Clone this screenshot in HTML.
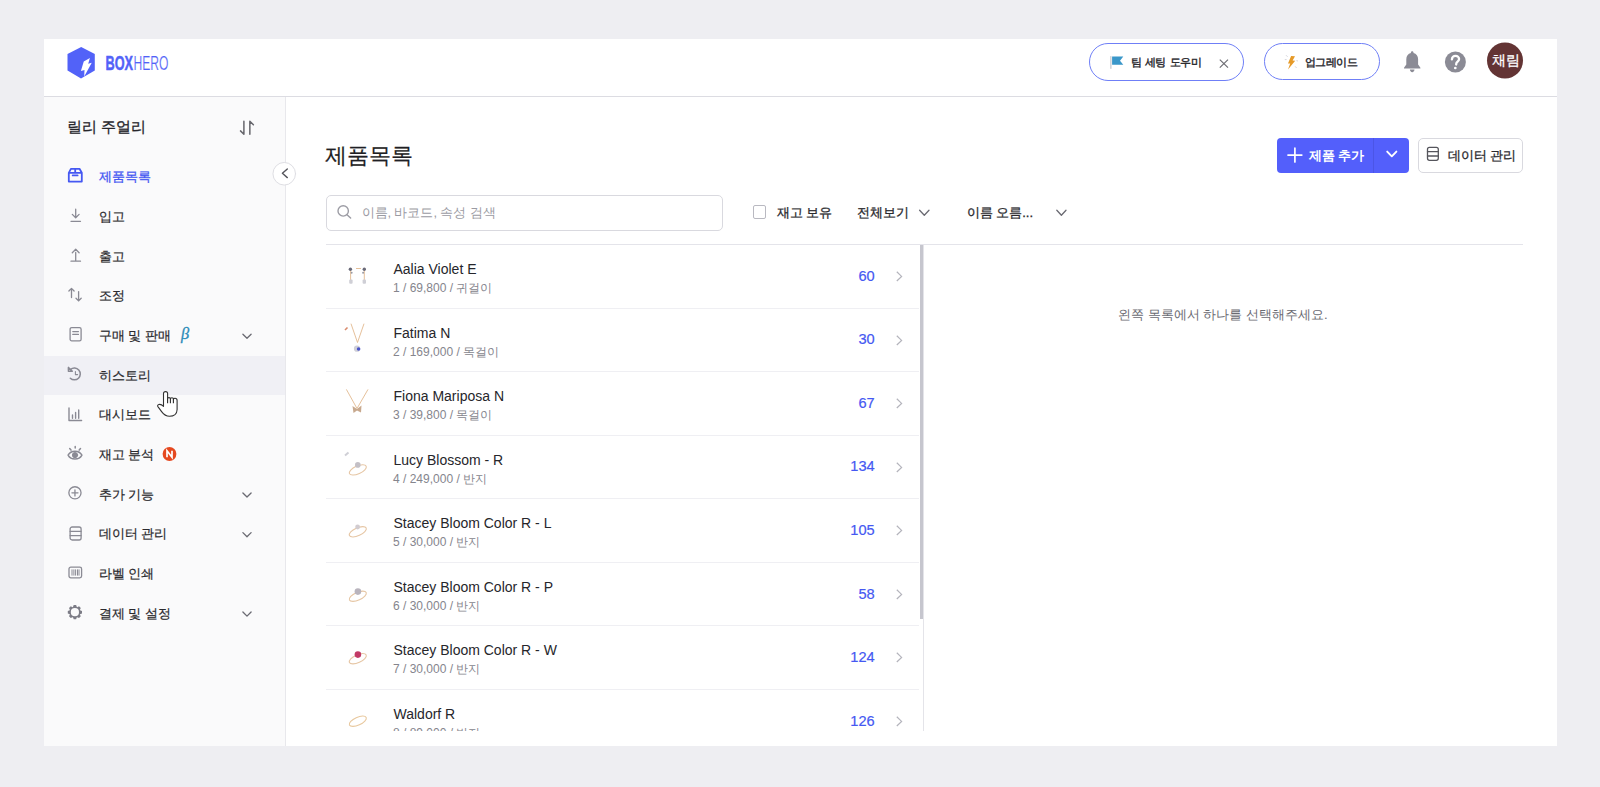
<!DOCTYPE html>
<html lang="ko">
<head>
<meta charset="utf-8">
<style>
*{box-sizing:border-box;margin:0;padding:0}
html,body{width:1600px;height:787px;overflow:hidden}
body{background:#eeeef2;font-family:"Liberation Sans",sans-serif;color:#222;position:relative}
.a{position:absolute}
.t{position:absolute;white-space:nowrap;line-height:1;z-index:6}
svg{position:absolute;overflow:visible;z-index:5}
#card{left:44px;top:39px;width:1513px;height:707px;background:#fff}
#hdrline{left:44px;top:96px;width:1513px;height:1px;background:#dcdce2}
#side{left:44px;top:97px;width:241px;height:649px;background:#fafafb}
#sideline{left:285px;top:97px;width:1px;height:649px;background:#e8e8ec}
.pill{position:absolute;border:1.3px solid #6f7ff7;border-radius:19px;background:#fff}
.m{-webkit-text-stroke-width:0.3px}
.nav{-webkit-text-stroke-width:0.22px;font-size:13px;font-weight:500;color:#2a2a2e}
</style>
</head>
<body>
<div class="a" id="card"></div>
<div class="a" id="hdrline"></div>
<div class="a" id="side"></div>
<div class="a" id="sideline"></div>

<!-- HEADER -->

<svg class="a" style="left:0;top:0" width="1600" height="787" viewBox="0 0 1600 787">
  <polygon points="81.2,47 94.8,54.1 94.8,70.4 81,78.6 67.5,70.6 67.5,54.1" fill="#5262f8"/>
  <polygon points="89.9,57.9 83.75,61.4 80.9,71 84.5,70.1 84.2,76.45 91.75,62.8 88.2,63.75" fill="#fff"/>
  <text x="105.5" y="69.6" font-family="Liberation Sans" font-size="19.5" font-weight="700" fill="#5262f8" stroke="#5262f8" stroke-width="0.5" textLength="27.5" lengthAdjust="spacingAndGlyphs">BOX</text>
  <text x="133.5" y="69.6" font-family="Liberation Sans" font-size="19.5" font-weight="400" fill="#5262f8" stroke="#fff" stroke-width="0.22" textLength="35" lengthAdjust="spacingAndGlyphs">HERO</text>
  <!-- flag -->
  <rect x="1110.1" y="56.1" width="1.5" height="12.7" fill="#d2d2d6"/>
  <polygon points="1112.1,56.6 1123.3,56.6 1120,60.7 1123.3,64.85 1112.1,64.85" fill="#3a97c9"/>
  <!-- close x -->
  <path d="M1219.8 59.6 L1228 67.6 M1228 59.6 L1219.8 67.6" stroke="#6e6e74" stroke-width="1.2" fill="none"/>
  <!-- bolt -->
  <polygon points="1291.1,56 1295,56.2 1292.6,60.6 1295.2,60.8 1288,69.6 1290.2,63.6 1288,63.4" fill="#e69a28"/>
  <path d="M1286 55.2 L1287.6 56.8 M1284.8 59.6 H1286.6 M1296.4 60.6 L1298 61 M1295.2 66.4 L1296.6 68" stroke="#c9c9d2" stroke-width="0.8" fill="none"/>
  <!-- bell -->
  <path d="M1412.2 51.3 c0.8 0 1.3 0.6 1.3 1.3 v0.5 c2.9 0.7 4.6 3.2 4.6 6.2 v5.2 l2.3 3.3 v0.6 h-16.4 v-0.6 l2.3 -3.3 v-5.2 c0 -3 1.7 -5.5 4.6 -6.2 v-0.5 c0 -0.7 0.5 -1.3 1.3 -1.3 z M1409.9 69.6 h4.6 c0 1.4 -1 2.6 -2.3 2.6 s-2.3 -1.2 -2.3 -2.6 z" fill="#8b8b95"/>
  <!-- help -->
  <circle cx="1455.4" cy="62" r="10.5" fill="#8b8b95"/>
  <path d="M1451.9 59.4 c0 -2.1 1.6 -3.6 3.6 -3.6 s3.6 1.4 3.6 3.3 c0 2.5 -2.9 2.7 -2.9 5 v0.5" stroke="#fff" stroke-width="2.3" fill="none" stroke-linecap="round"/>
  <circle cx="1455.3" cy="68" r="1.35" fill="#fff"/>
  <!-- avatar -->
  <circle cx="1505" cy="60.5" r="18" fill="#633434"/>
</svg>
<div class="pill" style="left:1089px;top:43px;width:155px;height:38px"></div>
<div class="pill" style="left:1264px;top:43px;width:116px;height:37px"></div>
<div class="t" style="left:1130.5px;top:57.2px;font-size:11.3px;-webkit-text-stroke-width:0.4px;color:#26262b;word-spacing:1.3px;letter-spacing:-0.55px">팀 세팅 도우미</div>
<div class="t" style="left:1305px;top:57.2px;font-size:11.3px;-webkit-text-stroke-width:0.4px;letter-spacing:-0.55px;color:#26262b">업그레이드</div>
<div class="t m" style="left:1491.5px;top:53px;font-size:14px;color:#fff">채림</div>
<!--HEADER-->

<!-- SIDEBAR -->
<div class="a" style="left:44px;top:356px;width:241px;height:39px;background:#f0f0f5"></div>
<div class="t" style="left:67px;top:118.5px;font-size:15.2px;-webkit-text-stroke-width:0.32px;color:#26262b">릴리 주얼리</div>
<div class="t nav" style="left:98.8px;top:170.25px;color:#4558f2;-webkit-text-stroke-width:0.3px">제품목록</div>
<div class="t nav" style="left:98.8px;top:209.94px;color:#2a2a2e;font-weight:500">입고</div>
<div class="t nav" style="left:98.8px;top:249.63px;color:#2a2a2e;font-weight:500">출고</div>
<div class="t nav" style="left:98.8px;top:289.32px;color:#2a2a2e;font-weight:500">조정</div>
<div class="t nav" style="left:98.8px;top:329.01px;color:#2a2a2e;font-weight:500">구매 및 판매</div>
<div class="t nav" style="left:98.8px;top:368.70px;color:#2a2a2e;font-weight:500">히스토리</div>
<div class="t nav" style="left:98.8px;top:408.39px;color:#2a2a2e;font-weight:500">대시보드</div>
<div class="t nav" style="left:98.8px;top:448.08px;color:#2a2a2e;font-weight:500">재고 분석</div>
<div class="t nav" style="left:98.8px;top:487.77px;color:#2a2a2e;font-weight:500">추가 기능</div>
<div class="t nav" style="left:98.8px;top:527.46px;color:#2a2a2e;font-weight:500">데이터 관리</div>
<div class="t nav" style="left:98.8px;top:567.15px;color:#2a2a2e;font-weight:500">라벨 인쇄</div>
<div class="t nav" style="left:98.8px;top:606.84px;color:#2a2a2e;font-weight:500">결제 및 설정</div>
<div class="t" style="left:181px;top:326px;font-family:'Liberation Serif',serif;font-style:italic;font-weight:400;font-size:16.5px;color:#2b8bb8;-webkit-text-stroke-width:0.3px">β</div>
<svg class="a" style="left:0;top:0" width="1600" height="787" viewBox="0 0 1600 787"><g fill="none" stroke="#8a8a94" stroke-width="1.3" stroke-linecap="round" stroke-linejoin="round">
<path d="M243.9 121.3 V134.2 L240.5 130.9 M249.85 134.2 V121.3 L253.4 124.8" stroke="#66666c" stroke-width="1.5"/>
<g transform="translate(68.3,168.2)"><path d="M2.6 0.6 H11.2 L13.5 4.6 V13.4 H0.5 V4.6 Z M0.5 4.6 H13.5 M6.9 0.6 V4.6" stroke="#4558f2" stroke-width="1.8"/><path d="M4.4 7.2 H9.3" stroke="#4558f2" stroke-width="1.8"/></g>
<g transform="translate(69.1,208.4)"><path d="M6.6 0.8 V9.2 M3.2 6 L6.6 9.4 L10 6 M1.9 12.9 H11.4"/></g>
<g transform="translate(69.1,248.3)"><path d="M6.6 4.2 V12 M3.2 4.4 L6.6 1 L10 4.4 M1.9 12.9 H11.4"/></g>
<g transform="translate(68.3,287.6)"><path d="M3.2 0.8 V10 M0.6 3.4 L3.2 0.8 L5.8 3.4 M10.3 4 V13.3 M7.7 10.7 L10.3 13.3 L12.9 10.7"/></g>
<g transform="translate(68.6,327)"><rect x="1.5" y="0.6" width="11" height="13.2" rx="1.6"/><path d="M4.2 4.6 H9.8 M4.2 7.4 H9.8"/></g>
<path d="M70.6 369.4 A5.9 5.9 0 1 1 70.3 378.2" stroke-width="1.5"/><path d="M68.5 367.6 L72.3 371.3 M68.4 367.6 V370.6 M68.4 371.3 H72.3" stroke-width="1.5"/><path d="M75.4 371.6 V374.6 H77.6" stroke-width="1.1"/>
<g transform="translate(68.3,407.5)"><path d="M0.7 0.4 V13 H13.3 M4.2 10.7 V7.5 M7.3 10.7 V5 M10.4 10.7 V2.5" stroke-width="1.4"/></g>
<g transform="translate(68.3,445.2)"><path d="M-0.2 9.9 C2.6 4.6 10.8 4.6 13.6 9.9 C10.8 15.2 2.6 15.2 -0.2 9.9 Z" stroke-width="1.5"/><circle cx="6.7" cy="9.9" r="2.6" fill="#8a8a94" stroke-width="1"/><path d="M6.9 1.2 V2.9 M1.4 3.4 L2.7 4.9 M12.2 3.4 L10.9 4.9" stroke-width="1.5"/></g>
<g transform="translate(68.3,486.2)"><circle cx="6.65" cy="6.65" r="6.1"/><path d="M6.65 3.6 V9.7 M3.6 6.65 H9.7"/></g>
<g transform="translate(68.6,526.3)"><rect x="1.5" y="0.7" width="11" height="13" rx="2"/><path d="M1.5 5 H12.5 M1.5 9.3 H12.5"/></g>
<g transform="translate(68.3,565.8)"><rect x="0.7" y="1.3" width="12.6" height="10.8" rx="1.8"/><path d="M3.7 4 V9.4 M5.6 4 V9.4 M7.3 4 V9.4 M9.2 4 V9.4 M10.7 4 V9.4" stroke-width="1"/></g>
<path d="M72.96 607.05 L73.68 605.10 L76.12 605.10 L76.84 607.05 L77.17 607.19 L79.06 606.32 L80.78 608.04 L79.91 609.93 L80.05 610.26 L82.00 610.98 L82.00 613.42 L80.05 614.14 L79.91 614.47 L80.78 616.36 L79.06 618.08 L77.17 617.21 L76.84 617.35 L76.12 619.30 L73.68 619.30 L72.96 617.35 L72.63 617.21 L70.74 618.08 L69.02 616.36 L69.89 614.47 L69.75 614.14 L67.80 613.42 L67.80 610.98 L69.75 610.26 L69.89 609.93 L69.02 608.04 L70.74 606.32 L72.63 607.19 Z M79.00 612.20 A4.1 4.1 0 1 0 70.80 612.20 A4.1 4.1 0 1 0 79.00 612.20 Z" fill="#7c7c86" fill-rule="evenodd" stroke="none"/>
<path d="M242.9 492.97 L247 497.07 L251.1 492.97" stroke="#6a6a72" stroke-width="1.3"/>
<path d="M242.9 532.66 L247 536.76 L251.1 532.66" stroke="#6a6a72" stroke-width="1.3"/>
<path d="M242.9 612.04 L247 616.14 L251.1 612.04" stroke="#6a6a72" stroke-width="1.3"/>
<path d="M242.9 334.21 L247 338.31 L251.1 334.21" stroke="#6a6a72" stroke-width="1.3"/>
<circle cx="284.25" cy="173.75" r="11.3" fill="#fff" stroke="#dedee3" stroke-width="1"/>
<path d="M287.3 168.9 L282.4 173.3 L287.3 177.6" stroke="#55555c" stroke-width="1.4"/>
</g>
<circle cx="169.5" cy="454" r="6.9" fill="#e5481f"/>
<path d="M167 457.3 V450.7 L172 457.3 V450.7" fill="none" stroke="#fff" stroke-width="1.7" stroke-linejoin="miter"/>
</svg>

<!-- CONTENT -->
<div class="t" style="left:325.2px;top:145.2px;font-size:22px;color:#1f1f24;-webkit-text-stroke-width:0.2px">제품목록</div>
<div class="a" style="left:1277px;top:137.5px;width:132px;height:35px;background:#535ffb;border-radius:4px;z-index:2"></div>
<div class="a" style="left:1373px;top:137.5px;width:1px;height:35px;background:#4b55e6;z-index:3"></div>
<div class="t" style="left:1309px;top:148.7px;font-size:13px;font-weight:700;color:#fff;word-spacing:-0.04em">제품 추가</div>
<div class="a" style="left:1417.5px;top:137.5px;width:105.5px;height:35px;border:1px solid #d9d9df;border-radius:5px;background:#fff;z-index:2"></div>
<div class="t m" style="left:1448.1px;top:148.7px;font-size:13px;color:#2a2a2e;word-spacing:-0.04em">데이터 관리</div>
<div class="a" style="left:326px;top:194.5px;width:397px;height:36px;border:1px solid #d9d9df;border-radius:5px;background:#fff;z-index:2"></div>
<div class="t" style="left:361.5px;top:206.4px;font-size:13px;color:#9b9ba3;word-spacing:-0.02em">이름, 바코드, 속성 검색</div>
<div class="a" style="left:752.5px;top:205.2px;width:13.5px;height:13.5px;border:1px solid #b9b9c1;border-radius:2px;background:#fff;z-index:2"></div>
<div class="t m" style="left:776.5px;top:206.1px;font-size:13px;color:#2a2a2e;word-spacing:-0.04em">재고 보유</div>
<div class="t m" style="left:857.4px;top:206.1px;font-size:13px;color:#2a2a2e">전체보기</div>
<div class="t m" style="left:967.1px;top:206.1px;font-size:13px;color:#2a2a2e;word-spacing:-0.04em">이름 오름...</div>
<div class="a" style="left:326px;top:244px;width:1197px;height:1px;background:#e4e4ea"></div>
<div class="t" style="left:1223px;top:308px;font-size:13px;color:#6a6a72;transform:translateX(-50%)">왼쪽 목록에서 하나를 선택해주세요.</div>
<svg class="a" style="left:0;top:0" width="1600" height="787" viewBox="0 0 1600 787"><g fill="none" stroke-linecap="round" stroke-linejoin="round">
<circle cx="343.2" cy="210.9" r="5.2" stroke="#9d9da5" stroke-width="1.4"/><path d="M347 214.8 L350.6 218" stroke="#9d9da5" stroke-width="1.5"/>
<path d="M1288 155.1 H1301.8 M1294.9 148.2 V162" stroke="#fff" stroke-width="1.7"/>
<path d="M1387.2 151.6 L1391.8 156.3 L1396.4 151.6" stroke="#fff" stroke-width="1.9"/>
<rect x="1427.5" y="147.3" width="10.8" height="13" rx="2" stroke="#55555c" stroke-width="1.3"/><path d="M1427.5 151.7 H1438.3 M1427.5 156 H1438.3" stroke="#55555c" stroke-width="1.3"/>
<path d="M919.6 210.3 L924.3 215.2 L929 210.3" stroke="#6a6a72" stroke-width="1.3"/>
<path d="M1056.8 210.3 L1061.4 215.2 L1066 210.3" stroke="#6a6a72" stroke-width="1.3"/>
</g></svg>

<!-- LIST -->
<div class="a" style="left:326px;top:245px;width:598px;height:486px;overflow:hidden;z-index:1">
<div class="a" style="left:0;top:62.55px;width:593px;height:1px;background:#efeff3"></div>
<div class="t" style="left:67.5px;top:17.10px;font-size:14px;color:#26262b">Aalia Violet E</div>
<div class="t" style="left:67px;top:37.10px;font-size:12px;color:#85858d">1 / 69,800 / 귀걸이</div>
<div class="t" style="right:49.3px;top:23.80px;font-size:14.6px;-webkit-text-stroke-width:0.2px;color:#4558f2">60</div>
<svg style="left:0;top:0.00px" width="597" height="64"><path d="M570.8 26.8 L575.6 31.4 L570.8 36" fill="none" stroke="#b4b4bc" stroke-width="1.2"/></svg>
<div class="a" style="left:0;top:126.10px;width:593px;height:1px;background:#efeff3"></div>
<div class="t" style="left:67.5px;top:80.65px;font-size:14px;color:#26262b">Fatima N</div>
<div class="t" style="left:67px;top:100.65px;font-size:12px;color:#85858d">2 / 169,000 / 목걸이</div>
<div class="t" style="right:49.3px;top:87.35px;font-size:14.6px;-webkit-text-stroke-width:0.2px;color:#4558f2">30</div>
<svg style="left:0;top:63.55px" width="597" height="64"><path d="M570.8 26.8 L575.6 31.4 L570.8 36" fill="none" stroke="#b4b4bc" stroke-width="1.2"/></svg>
<div class="a" style="left:0;top:189.65px;width:593px;height:1px;background:#efeff3"></div>
<div class="t" style="left:67.5px;top:144.20px;font-size:14px;color:#26262b">Fiona Mariposa N</div>
<div class="t" style="left:67px;top:164.20px;font-size:12px;color:#85858d">3 / 39,800 / 목걸이</div>
<div class="t" style="right:49.3px;top:150.90px;font-size:14.6px;-webkit-text-stroke-width:0.2px;color:#4558f2">67</div>
<svg style="left:0;top:127.10px" width="597" height="64"><path d="M570.8 26.8 L575.6 31.4 L570.8 36" fill="none" stroke="#b4b4bc" stroke-width="1.2"/></svg>
<div class="a" style="left:0;top:253.20px;width:593px;height:1px;background:#efeff3"></div>
<div class="t" style="left:67.5px;top:207.75px;font-size:14px;color:#26262b">Lucy Blossom - R</div>
<div class="t" style="left:67px;top:227.75px;font-size:12px;color:#85858d">4 / 249,000 / 반지</div>
<div class="t" style="right:49.3px;top:214.45px;font-size:14.6px;-webkit-text-stroke-width:0.2px;color:#4558f2">134</div>
<svg style="left:0;top:190.65px" width="597" height="64"><path d="M570.8 26.8 L575.6 31.4 L570.8 36" fill="none" stroke="#b4b4bc" stroke-width="1.2"/></svg>
<div class="a" style="left:0;top:316.75px;width:593px;height:1px;background:#efeff3"></div>
<div class="t" style="left:67.5px;top:271.30px;font-size:14px;color:#26262b">Stacey Bloom Color R - L</div>
<div class="t" style="left:67px;top:291.30px;font-size:12px;color:#85858d">5 / 30,000 / 반지</div>
<div class="t" style="right:49.3px;top:278.00px;font-size:14.6px;-webkit-text-stroke-width:0.2px;color:#4558f2">105</div>
<svg style="left:0;top:254.20px" width="597" height="64"><path d="M570.8 26.8 L575.6 31.4 L570.8 36" fill="none" stroke="#b4b4bc" stroke-width="1.2"/></svg>
<div class="a" style="left:0;top:380.30px;width:593px;height:1px;background:#efeff3"></div>
<div class="t" style="left:67.5px;top:334.85px;font-size:14px;color:#26262b">Stacey Bloom Color R - P</div>
<div class="t" style="left:67px;top:354.85px;font-size:12px;color:#85858d">6 / 30,000 / 반지</div>
<div class="t" style="right:49.3px;top:341.55px;font-size:14.6px;-webkit-text-stroke-width:0.2px;color:#4558f2">58</div>
<svg style="left:0;top:317.75px" width="597" height="64"><path d="M570.8 26.8 L575.6 31.4 L570.8 36" fill="none" stroke="#b4b4bc" stroke-width="1.2"/></svg>
<div class="a" style="left:0;top:443.85px;width:593px;height:1px;background:#efeff3"></div>
<div class="t" style="left:67.5px;top:398.40px;font-size:14px;color:#26262b">Stacey Bloom Color R - W</div>
<div class="t" style="left:67px;top:418.40px;font-size:12px;color:#85858d">7 / 30,000 / 반지</div>
<div class="t" style="right:49.3px;top:405.10px;font-size:14.6px;-webkit-text-stroke-width:0.2px;color:#4558f2">124</div>
<svg style="left:0;top:381.30px" width="597" height="64"><path d="M570.8 26.8 L575.6 31.4 L570.8 36" fill="none" stroke="#b4b4bc" stroke-width="1.2"/></svg>
<div class="a" style="left:0;top:507.40px;width:593px;height:1px;background:#efeff3"></div>
<div class="t" style="left:67.5px;top:461.95px;font-size:14px;color:#26262b">Waldorf R</div>
<div class="t" style="left:67px;top:481.95px;font-size:12px;color:#85858d">8 / 89,000 / 반지</div>
<div class="t" style="right:49.3px;top:468.65px;font-size:14.6px;-webkit-text-stroke-width:0.2px;color:#4558f2">126</div>
<svg style="left:0;top:444.85px" width="597" height="64"><path d="M570.8 26.8 L575.6 31.4 L570.8 36" fill="none" stroke="#b4b4bc" stroke-width="1.2"/></svg>
<div class="a" style="left:593.5px;top:0;width:3.5px;height:373.5px;background:#c6c6ce;z-index:7"></div>
<div class="a" style="left:597px;top:0;width:1px;height:486px;background:#e4e4e9;z-index:6"></div>
<svg style="left:0;top:0.00px" width="64" height="64"><g fill="none" stroke="#e2b98f" stroke-width="0.9"><path d="M24.6 25 V35"/><path d="M38.3 25 V35"/><path d="M30 23.5 H35"/></g>
<circle cx="24.4" cy="24.3" r="1.7" fill="#6a6a78"/><circle cx="38.3" cy="24.3" r="1.7" fill="#6a6a78"/>
<circle cx="25.6" cy="27.8" r="1" fill="#9a9aa4"/><circle cx="37.1" cy="27.8" r="1" fill="#9a9aa4"/>
<rect x="23.2" y="34.5" width="3.4" height="4.3" rx="1" fill="#cfcfd6"/><rect x="36.6" y="34.5" width="3.4" height="4.3" rx="1" fill="#cfcfd6"/></svg>
<svg style="left:0;top:63.55px" width="64" height="64"><path d="M25 14.7 L31.5 33.5 L38 14.7" fill="none" stroke="#e2b98f" stroke-width="0.9"/>
<circle cx="31" cy="39.7" r="3.1" fill="#cfcfd8"/><circle cx="32.6" cy="40" r="1.8" fill="#4b55c8"/>
<path d="M19 21 L21.5 18.5" stroke="#d98c6e" stroke-width="1.6"/></svg>
<svg style="left:0;top:127.10px" width="64" height="64"><path d="M20.4 17.4 L31 36.5 L42 17.4" fill="none" stroke="#e2b98f" stroke-width="0.9"/>
<path d="M26.5 34 L31 37 L35.5 33.5 L35 40.5 L31 38.5 L27.5 41 Z" fill="#c8a98e"/></svg>
<svg style="left:0;top:190.65px" width="64" height="64"><ellipse cx="31.8" cy="33.90" rx="9.2" ry="3.9" transform="rotate(-24 31.8 33.90)" fill="none" stroke="#e6c6a4" stroke-width="1.1"/><circle cx="31.8" cy="28.90" r="2.8" fill="#c4c0c6"/></svg>
<svg style="left:0;top:190.65px" width="64" height="64"><path d="M19 19.5 L22.5 16.5" stroke="#cfcfd6" stroke-width="2"/></svg>
<svg style="left:0;top:254.20px" width="64" height="64"><ellipse cx="31.8" cy="32.80" rx="9.2" ry="3.9" transform="rotate(-24 31.8 32.80)" fill="none" stroke="#e6c6a4" stroke-width="1.1"/><circle cx="31.6" cy="28.00" r="2.4" fill="#d2ccd0"/></svg>
<svg style="left:0;top:317.75px" width="64" height="64"><ellipse cx="31.8" cy="33.25" rx="9.2" ry="3.9" transform="rotate(-24 31.8 33.25)" fill="none" stroke="#e6c6a4" stroke-width="1.1"/><circle cx="31.9" cy="28.60" r="3.3" fill="#b9b4bd"/></svg>
<svg style="left:0;top:381.30px" width="64" height="64"><ellipse cx="31.8" cy="32.70" rx="9.2" ry="3.9" transform="rotate(-24 31.8 32.70)" fill="none" stroke="#e6c6a4" stroke-width="1.1"/><circle cx="31.9" cy="28.60" r="3.3" fill="#c23a66"/></svg>
<svg style="left:0;top:444.85px" width="64" height="64"><ellipse cx="31.8" cy="31.20" rx="9.2" ry="3.9" transform="rotate(-24 31.8 31.20)" fill="none" stroke="#e8c89e" stroke-width="1.1"/></svg></div>

<svg class="a" style="left:0;top:0;z-index:20" width="1600" height="787" viewBox="0 0 1600 787">
<path d="M163.5 406.3 V393.6 C163.5 392.3 164.4 391.6 165.6 391.6 C166.8 391.6 167.6 392.3 167.6 393.6 V398.6 C167.6 397.9 168.3 397.6 169 397.6 C169.8 397.6 170.4 398 170.4 398.8 C170.4 398.1 171.1 397.8 171.9 397.8 C172.7 397.8 173.4 398.3 173.4 399.1 C173.5 398.5 174.3 398.3 175 398.3 C176.3 398.3 177.1 399.2 177.1 400.5 V409.5 C177.1 413.7 173.9 416.3 169.5 416.3 C165.8 416.3 163.8 414.6 161.6 411.6 L157.9 406.6 C157.3 405.7 157.8 404.7 158.8 404.5 C160.6 404.1 162.2 405 163.5 406.3 Z" fill="#fff" stroke="#333" stroke-width="1.1" stroke-linejoin="round"/>
<path d="M167.6 398.6 V403.3 M170.4 398.8 V403.3 M173.4 399.1 V403.3" stroke="#2a2a2a" stroke-width="1.1" fill="none"/>
</svg>
</body>
</html>
